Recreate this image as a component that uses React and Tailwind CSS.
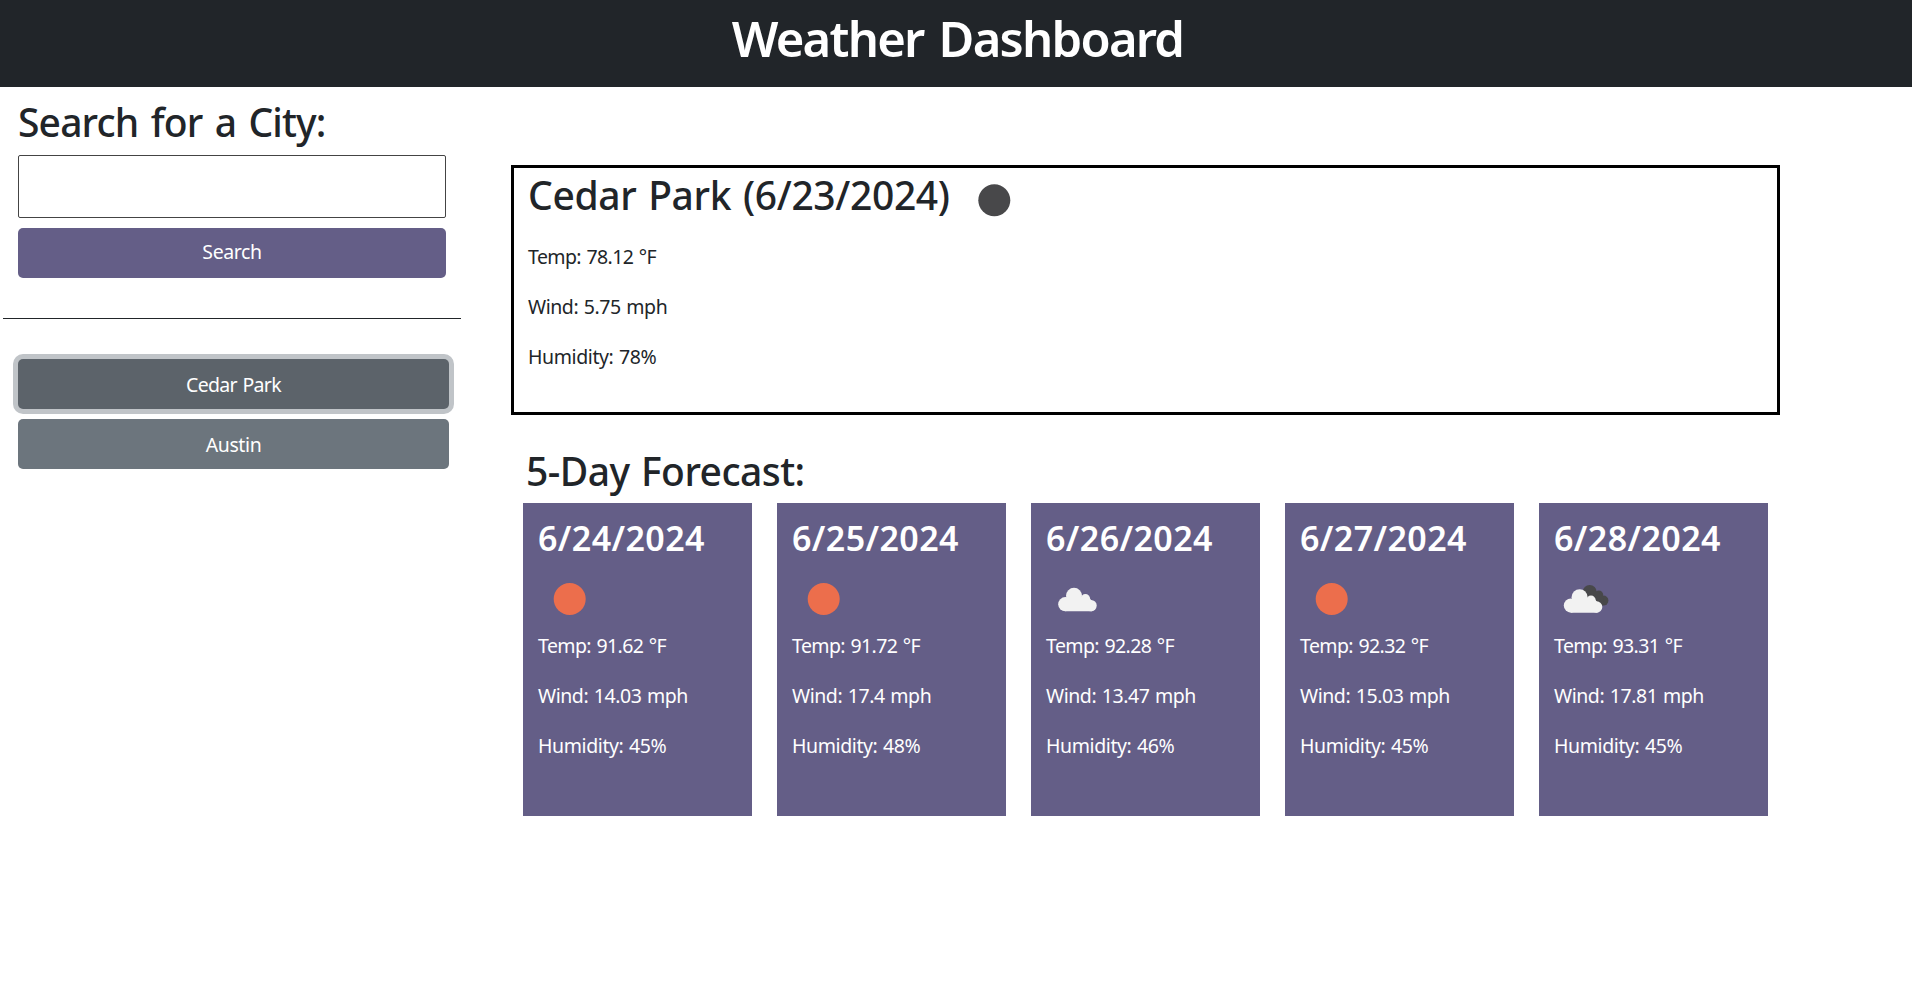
const SUN = "sun";
const CLOUD = "cloud";
const CLOUDS = "clouds";

const forecast = [
  { date: "6/24/2024", icon: SUN, temp: "91.62", wind: "14.03", humidity: 45 },
  { date: "6/25/2024", icon: SUN, temp: "91.72", wind: "17.4", humidity: 48 },
  { date: "6/26/2024", icon: CLOUD, temp: "92.28", wind: "13.47", humidity: 46 },
  { date: "6/27/2024", icon: SUN, temp: "92.32", wind: "15.03", humidity: 45 },
  { date: "6/28/2024", icon: CLOUDS, temp: "93.31", wind: "17.81", humidity: 45 },
];

function CloudShape() {
  return (
    <g fill="#f2f2f2">
      <circle cx="28" cy="27.8" r="8" />
      <circle cx="39.4" cy="30.8" r="4.7" />
      <circle cx="19.3" cy="36.2" r="7.1" />
      <circle cx="45" cy="37.6" r="5.7" />
      <path d="M19.3 29.5H43L46 33V43.3H19.3Z" />
    </g>
  );
}

function WeatherIcon({ kind, className = "" }) {
  return (
    <svg viewBox="0 0 62 62" className={`h-[62px] w-[62px] shrink-0 ${className}`}>
      {kind === "night" && <circle cx="31.3" cy="31.2" r="16" fill="#48484a" />}
      {kind === SUN && <circle cx="31.7" cy="31" r="16" fill="#ec6e4c" />}
      {kind === CLOUD && <CloudShape />}
      {kind === CLOUDS && (
        <>
          <g fill="#48484a">
            <circle cx="35.7" cy="24" r="7" />
            <circle cx="44.8" cy="26.8" r="4.4" />
            <circle cx="49.4" cy="32.6" r="5" />
            <path d="M35 24L45 24L50 30L49 37.6L43 34Z" />
          </g>
          <g transform="translate(-2.4 1.4)">
            <CloudShape />
          </g>
        </>
      )}
    </svg>
  );
}

function Readings({ temp, wind, humidity }) {
  return (
    <div className="flex flex-col gap-5 text-[19.5px] leading-[30px] [word-spacing:1px]">
      <p className="tracking-[-0.6px]">Temp: {temp} °F</p>
      <p className="tracking-[-0.45px]">Wind: {wind} mph</p>
      <p className="tracking-[-0.4px]">Humidity: {humidity}%</p>
    </div>
  );
}

export default function App() {
  return (
    <div className="min-h-screen bg-white font-['Noto_Sans','Open_Sans',sans-serif] text-[#212529]">
      <header className="h-[87px] bg-[#212529] pt-2 pl-[3px] text-center text-white">
        <h1 className="text-[49px] leading-[60px] font-semibold tracking-[-1.75px] [word-spacing:4px]">
          Weather Dashboard
        </h1>
      </header>

      <main className="flex">
        <aside className="w-[461px] pt-[11px]">
          <form className="flex flex-col pr-[15px] pl-[18px]" onSubmit={(e) => e.preventDefault()}>
            <h2 className="text-[39px] leading-[48px] font-medium tracking-[-0.85px] [word-spacing:3px]">
              Search for a City:
            </h2>
            <input
              aria-label="City"
              className="mt-[9px] h-[63px] rounded-[2px] border border-[#444444] px-2 text-[19.5px] outline-none"
            />
            <button className="mt-[10px] h-[50px] rounded-[5px] bg-[#645e87] pb-[2px] text-[19.5px] tracking-[-0.4px] text-white">
              Search
            </button>
          </form>

          <hr className="mt-10 ml-[3px] border-t border-[#212529]" />

          <div className="mt-10 flex flex-col gap-[10px] pr-3 pl-[18px] text-[19.5px] text-white">
            <button className="h-[50px] rounded-[5px] bg-[#5c636a] pt-[2px] tracking-[-0.65px] ring-[5px] ring-[#c0c4c8] [word-spacing:1px]">
              Cedar Park
            </button>
            <button className="h-[50px] rounded-[5px] bg-[#6c757d] pt-[2px] tracking-[-0.4px]">Austin</button>
          </div>
        </aside>

        <div className="ml-[50px] w-[1269px] pt-[78px]">
          <section className="h-[250px] border-[3px] border-black px-[14px] pt-[3px]">
            <div className="flex h-12 items-center">
              <h2 className="w-[424px] text-[39px] leading-[48px] font-medium tracking-[-0.35px] whitespace-nowrap [word-spacing:2px]">
                Cedar Park (6/23/2024)
              </h2>
              <WeatherIcon kind="night" className="ml-[11px] mt-[10px]" />
            </div>
            <div className="mt-[23px]">
              <Readings temp="78.12" wind="5.75" humidity={78} />
            </div>
          </section>

          <section className="mt-8 pr-3 pl-3">
            <h2 className="pl-[3px] text-[39px] leading-[48px] font-medium tracking-[-0.55px] [word-spacing:2px]">
              5-Day Forecast:
            </h2>
            <div className="mt-2 grid grid-cols-5 gap-[25px]">
              {forecast.map((day) => (
                <article key={day.date} className="h-[313px] bg-[#645e87] px-[15px] pt-[14px] text-white">
                  <h3 className="text-[34px] leading-[42px] font-semibold tracking-[0.4px]">{day.date}</h3>
                  <WeatherIcon kind={day.icon} className="mt-[9px] mb-px" />
                  <Readings {...day} />
                </article>
              ))}
            </div>
          </section>
        </div>
      </main>
    </div>
  );
}
